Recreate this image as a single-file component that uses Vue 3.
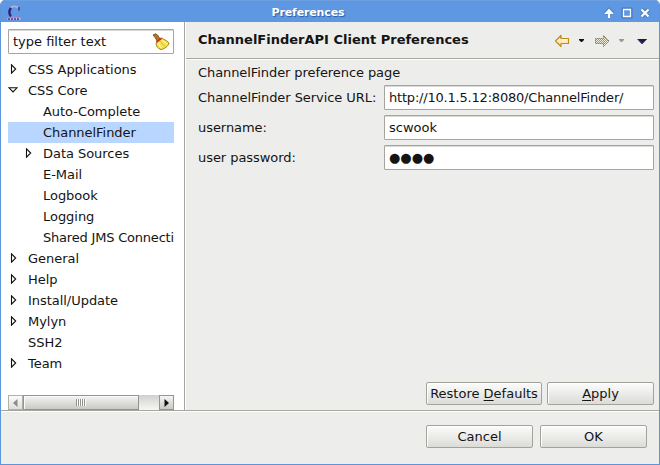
<script setup>
const tree = [
  { label: 'CSS Applications', state: 'closed' },
  { label: 'CSS Core', state: 'open' },
  { label: 'Auto-Complete', child: true },
  { label: 'ChannelFinder', child: true, selected: true },
  { label: 'Data Sources', child: true, state: 'closed' },
  { label: 'E-Mail', child: true },
  { label: 'Logbook', child: true },
  { label: 'Logging', child: true },
  { label: 'Shared JMS Connecti', child: true },
  { label: 'General', state: 'closed' },
  { label: 'Help', state: 'closed' },
  { label: 'Install/Update', state: 'closed' },
  { label: 'Mylyn', state: 'closed' },
  { label: 'SSH2' },
  { label: 'Team', state: 'closed' },
]
const fields = [
  { label: 'ChannelFinder Service URL:', value: 'http://10.1.5.12:8080/ChannelFinder/', kind: 'url' },
  { label: 'username:', value: 'scwook', kind: 'plain' },
  { label: 'user password:', value: '●●●●', kind: 'secret' },
]
</script>

<template>
  <div class="window">
    <header class="titlebar">
      <svg class="app-icon" width="16" height="16" viewBox="0 0 16 16">
        <path d="M4.500 2.800C6 1 10.500 1 12.500 3" fill="none" stroke="#b9aedb" stroke-width="1.800" />
        <path d="M5 3C2.800 5.500 2.800 9.500 5.200 11.500" fill="none" stroke="#2b2377" stroke-width="2.400" />
        <path d="M13 2V5.500" stroke="#433a93" stroke-width="1.600" />
        <path d="M5 11.200C7 12.500 11 12.500 13 10.500" fill="none" stroke="#8c86cf" stroke-width="1.400" />
        <path d="M1.500 13.700h13" stroke="#dcb9d6" stroke-width="2" />
        <path d="M2 14h12" stroke="#45368f" stroke-width="1.400" stroke-dasharray="2 1" />
      </svg>
      <span class="title">Preferences</span>
      <svg class="controls" width="48" height="14" viewBox="0 0 48 14">
        <g fill="none" stroke="#3566aa" stroke-width="4" opacity=".6">
          <path d="M6 11.500V5M2.500 7.500 6 4 9.500 7.500M20.500 3.500h7v7h-7zM38.500 3.500l7 7M45.500 3.500l-7 7" />
        </g>
        <path d="M6 2.500 10.200 7v1H7.200v4H4.800V8H1.800V7z" fill="#fff" />
        <path d="M38.500 3.500l7 7M45.500 3.500l-7 7" stroke="#fff" stroke-width="2.200" />
        <path d="M20.500 3.500h7v7h-7z" fill="#5e98e2" stroke="#fff" stroke-width="1.300" />
      </svg>
    </header>

    <main class="body">
      <aside class="sidebar">
        <div class="field filter">
          <span>type filter text</span>
          <svg width="18" height="18" viewBox="0 0 18 18">
            <path d="M1 2 3.500 .8 5.500 2 8 6 5 8 3.500 5z" fill="#b87524" stroke="#7b4812" stroke-width=".9" />
            <path d="M5 8.500 9.500 5C11.500 6.500 14.500 7 17 10 16.500 13 12.500 16 9 16.500 5.500 15.500 4.500 13 4 11z" fill="#f6df4e" stroke="#a98116" />
            <path d="M6.500 9.500C7 12 8 13.500 9.500 15M10 7 15 11" fill="none" stroke="#fff3a0" stroke-width="1.300" />
            <path d="M8.500 8.500 12.500 13" fill="none" stroke="#dfbd30" stroke-width="1" />
            <path d="M4.500 9 9.500 5.200" stroke="#d62f20" stroke-width="1.900" />
          </svg>
        </div>
        <ul class="tree">
          <li v-for="n in tree" :key="n.label" :class="{ child: n.child, selected: n.selected }">
            <span class="twisty">
              <svg v-if="n.state === 'closed'" width="10" height="10" viewBox="0 0 10 10">
                <path d="M3.500 .8v8.400L7.700 5z" fill="#fff" stroke="#111" stroke-width="1.100" />
              </svg>
              <svg v-else-if="n.state === 'open'" width="10" height="10" viewBox="0 0 10 10">
                <path d="M1 2.800h8L5 7z" fill="#fff" stroke="#111" stroke-width="1.100" />
              </svg>
            </span>
            <span class="name">{{ n.label }}</span>
          </li>
        </ul>
        <div class="scrollbar">
          <span class="step off"><svg width="5" height="8" viewBox="0 0 5 8"><path d="M4.500 0v8L0 4z" fill="#8b8b87" /></svg></span>
          <span class="thumb"><i v-for="g in 5" :key="g"></i></span>
          <span class="step"><svg width="5" height="8" viewBox="0 0 5 8"><path d="M.5 0v8L5 4z" fill="#111" /></svg></span>
        </div>
      </aside>

      <section class="page">
        <div class="page-head">
          <h1>ChannelFinderAPI Client Preferences</h1>
          <svg width="96" height="18" viewBox="0 -1 96 18">
            <defs>
              <linearGradient id="gold" x2="0" y2="1">
                <stop offset="0" stop-color="#fffdf0" />
                <stop offset="1" stop-color="#ffdf8a" />
              </linearGradient>
              <pattern id="dither" width="2" height="2" patternUnits="userSpaceOnUse">
                <rect width="2" height="2" fill="#f3efdd" />
                <path d="M0 0h1v1H0zM1 1h1v1H1z" fill="#a39470" />
              </pattern>
            </defs>
            <path d="M1.500 10 7 4.500V7.500h7.500v5H7v3z" fill="url(#gold)" stroke="#c18a1c" stroke-width="1.200" stroke-linejoin="round" />
            <path d="M25 8h5v1l-2 2h-1l-2-2z" fill="#111" />
            <path d="M55 10 49.500 4.500V7.500h-8v5h8v3z" fill="url(#dither)" stroke="#8d7d5b" stroke-dasharray="1.500 .5" />
            <path d="M65 8h5v1l-2 2h-1l-2-2z" fill="#999" />
            <path d="M83 8h10l-4.500 5h-1z" fill="#4b2a86" />
            <path d="M84 8h9l-4.500 4z" fill="#221a30" />
          </svg>
        </div>
        <div class="content">
          <p>ChannelFinder preference page</p>
          <div class="form">
            <label v-for="f in fields" :key="f.label" class="row">
              <span class="caption">{{ f.label }}</span>
              <span class="field"><span :class="f.kind">{{ f.value }}</span></span>
            </label>
          </div>
          <div class="page-actions">
            <button class="restore">Restore <u>D</u>efaults</button>
            <button><u>A</u>pply</button>
          </div>
        </div>
      </section>
    </main>

    <footer class="footer">
      <button>Cancel</button>
      <button>OK</button>
    </footer>
  </div>
</template>

<style>
body { background: #fff; overflow: hidden; }
</style>

<style scoped>
* { box-sizing: border-box; }
.window {
  width: 660px;
  height: 465px;
  display: flex;
  flex-direction: column;
  border: 1px solid #5e95da;
  border-top: 0;
  border-radius: 5px 5px 0 0;
  overflow: hidden;
  background: #ededeb;
  color: #141414;
  font: 13px/21px "DejaVu Sans", sans-serif;
}
.titlebar {
  height: 22px;
  flex: none;
  display: grid;
  grid-template-columns: 56px 1fr 48px;
  align-items: center;
  padding: 1px 8px 0 5px;
  background: #5e98e2;
  border-top: 1px solid #6c9fdf;
}
.title {
  padding: 1px 49px 0 0;
  text-align: center;
  font-size: 11px;
  font-weight: bold;
  letter-spacing: -0.15px;
  line-height: 20px;
  color: #fff;
  text-shadow: 1px 1px 1px #2d5a9c;
}
.body { display: flex; height: 388px; flex: none; }
.sidebar {
  width: 184px;
  flex: none;
  display: flex;
  flex-direction: column;
  padding: 7px 10px 0 7px;
  background: #fff;
  border-right: 1px solid #a6a69f;
}
.field {
  height: 25px;
  display: flex;
  align-items: center;
  padding: 0 4px;
  background: #fff;
  border: 1px solid #a5a59d;
  border-radius: 1px;
  box-shadow: inset 0 1px #d9d9d5;
}
.filter { width: 166px; justify-content: space-between; padding-right: 3px; }
.tree {
  flex: 1;
  width: 166px;
  margin: 5px 0 0;
  padding: 0;
  list-style: none;
  overflow: hidden;
}
.tree li { height: 21px; display: flex; white-space: nowrap; overflow: hidden; }
.tree .child { padding-left: 15px; }
.tree .selected { background: #b8d6ff; }
.name { letter-spacing: -0.04px; }
.tree li:nth-child(9) .name { letter-spacing: -0.2px; }
.twisty { width: 20px; flex: none; display: flex; padding-top: 5px; }
.scrollbar {
  width: 166px;
  height: 15px;
  display: flex;
  background: linear-gradient(#d0d0cd, #f6f6f5);
}
.step, .thumb {
  display: flex;
  align-items: center;
  justify-content: center;
  border: 1px solid #95958d;
  background: linear-gradient(#f4f4f3, #c9c9c6);
}
.step { width: 15px; }
.off { background: linear-gradient(#fbfbfa, #dededc); border-color: #b0b0a9; }
.thumb { width: 116px; gap: 1px; margin-right: 20px; padding-right: 2px; box-shadow: inset 1px 1px #fafafa; }
.thumb i { width: 1px; height: 7px; background: #92928d; box-shadow: 1px 0 #fff; }
.page { flex: 1; display: flex; flex-direction: column; border-left: 1px solid #fff; }
.page-head {
  height: 37px;
  flex: none;
  display: flex;
  justify-content: space-between;
  align-items: center;
  padding: 0 9px 2px 12px;
  border-bottom: 1px solid #a6a69f;
  box-shadow: 0 1px #fff;
}
h1 { margin: 0; font-size: 13px; font-weight: bold; line-height: 21px; }
.content { flex: 1; display: flex; flex-direction: column; padding: 3px 5px 5px 12px; }
p { margin: 0; letter-spacing: -0.08px; }
.form { display: flex; flex-direction: column; gap: 5px; margin-top: 2px; }
.row { display: flex; align-items: center; }
.caption { width: 186px; flex: none; white-space: nowrap; letter-spacing: -0.06px; }
.row .field { flex: 1; }
.url { letter-spacing: -0.2px; }
.page-actions { display: flex; justify-content: flex-end; gap: 5px; margin-top: auto; }
button {
  width: 107px;
  height: 23px;
  padding: 0;
  border: 1px solid #a3a39b;
  border-radius: 2px;
  background: linear-gradient(#fcfcfc, #dbdbd8);
  box-shadow: inset 1px 1px #fff;
  color: #141414;
  font: 13px/19px "DejaVu Sans", sans-serif;
}
.restore { width: 116px; }
u { text-underline-offset: 2px; }
.footer {
  flex: 1;
  display: flex;
  justify-content: flex-end;
  gap: 7px;
  padding: 14px 12px 0 0;
  border-top: 1px solid #a6a69f;
  box-shadow: inset 0 1px #fff;
}
</style>
